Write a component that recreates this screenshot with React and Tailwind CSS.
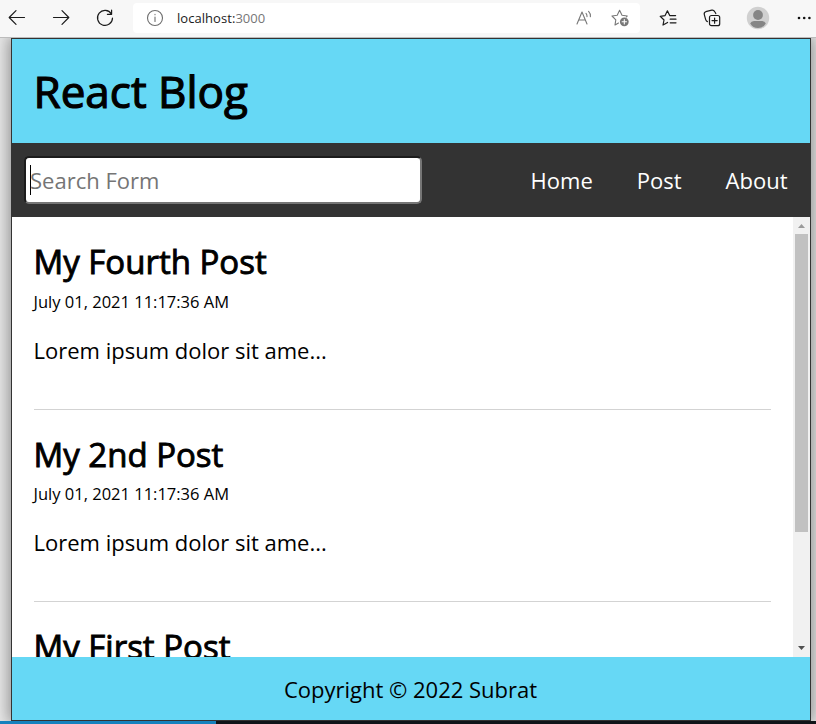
import React from 'react';

const posts = [
  { title: 'My Fourth Post', dateGap: 'mt-[6px]', full: true },
  { title: 'My 2nd Post', dateGap: 'mt-[5px]', full: true },
  { title: 'My First Post', full: false },
];

function Icon({ className = '', size = 18, children, sw = 1.2 }) {
  return (
    <svg
      className={`shrink-0 ${className}`}
      width={size}
      height={size}
      viewBox={`0 0 ${size} ${size}`}
      fill="none"
      stroke="currentColor"
      strokeWidth={sw}
      strokeLinecap="round"
      strokeLinejoin="round"
    >
      {children}
    </svg>
  );
}

function Toolbar() {
  return (
    <div className="flex h-[38px] shrink-0 items-center border-b border-[#bcbcbc] bg-[#f7f7f7] pb-px text-[#1b1b1b]">
      <Icon className="ml-2">
        <path d="M16.5 8.5H1.2M8 1.7L1.2 8.5L8 15.3" />
      </Icon>
      <Icon className="ml-[26px]">
        <path d="M1.5 8.5H16.8M10 1.7L16.8 8.5L10 15.3" />
      </Icon>
      <Icon className="ml-[26px]">
        <path d="M15.4 5A7.5 7.5 0 1 0 16.5 9M15.6 1.2V5.3H11.4" />
      </Icon>
      <div className="ml-[19px] flex h-[30px] w-[507px] items-center rounded-[4px] bg-white">
        <Icon className="ml-[13px] text-[#6e6e6e]" sw={1.1}>
          <circle cx="9" cy="9" r="7.5" />
          <path d="M9 8V12.5M9 5.4V5.8" />
        </Icon>
        <div className="ml-[13px] w-[359px] pt-px font-['Open_Sans',sans-serif] text-[13px] tracking-[0.05px] text-[#1b1b1b]">
          localhost:<span className="text-[#767676]">3000</span>
        </div>
        <Icon className="ml-[39px] text-[#777]" sw={1.1}>
          <path d="M2 15L7 3L12 15M3.7 11H10.3M11 4.4Q12.2 5.7 12 7.6M13.6 2.4Q15.8 4.6 15.4 7.8" />
        </Icon>
        <Icon className="ml-[18px] text-[#777]" sw={1.1}>
          <path d="M7.5 14L4 16L4.8 10.8L1 7L6.2 6.2L8.6 1.3L11 6.2L16.3 7L15.4 8" />
          <circle cx="13.3" cy="12.8" r="4.4" fill="currentColor" stroke="none" />
          <path d="M13.3 10.6V15M11.1 12.8H15.5" stroke="white" />
        </Icon>
      </div>
      <Icon className="ml-[19px]">
        <path d="M8.6 13.4L4 16L5 11L1.2 7.3L6.1 6.6L8.4 1.8L10.7 6.6H16.6M11.2 10.2H17M11.2 13.8H17" />
      </Icon>
      <Icon className="ml-[26px]">
        <rect x="6.5" y="6.5" width="10.2" height="10.2" rx="2" />
        <path d="M11.6 9V14.2M9 11.6H14.2M4.4 12.6Q3.2 12 2.7 10.6L1.3 5.6Q.8 3.4 2.8 2.7L8.8 1.2Q10.6 .8 11.5 2.4M12.8 4.6Q12.4 3.4 11.6 2.6" />
      </Icon>
      <svg className="ml-[25px] shrink-0" width="24" height="24" viewBox="0 0 24 24">
        <circle cx="12" cy="12" r="11.2" fill="#d0d0d0" />
        <circle cx="12" cy="9" r="4.9" fill="#858585" />
        <path d="M4.2 17.5Q5 14.9 8 14.9H16Q19 14.9 19.8 17.5Q17.2 22 12 22T4.2 17.5Z" fill="#858585" />
      </svg>
      <svg className="ml-[26px] shrink-0" width="16" height="6" viewBox="0 0 16 6" fill="#111">
        <circle cx="3" cy="3" r="1.3" />
        <circle cx="8.2" cy="3" r="1.3" />
        <circle cx="13.4" cy="3" r="1.3" />
      </svg>
    </div>
  );
}

function Post({ title, dateGap, full }) {
  return (
    <article className={`shrink-0 pt-[22px] ${full ? 'border-b border-[#d3d3d3] pb-[44px]' : ''}`}>
      <h2 className="text-[33px] leading-[45px] whitespace-nowrap [-webkit-text-stroke:0.9px_black]">{title}</h2>
      {full && (
        <>
          <p className={`${dateGap} text-[16.5px] leading-6 whitespace-nowrap`}>July 01, 2021 11:17:36 AM</p>
          <p className="mt-[21px] text-[22px] leading-[30px] whitespace-nowrap">Lorem ipsum dolor sit ame...</p>
        </>
      )}
    </article>
  );
}

export default function App() {
  return (
    <div className="flex h-[724px] w-[816px] flex-col overflow-hidden bg-[#e8e8e8] font-['Open_Sans',sans-serif] text-black">
      <Toolbar />
      <div className="flex h-[683px] shrink-0 overflow-hidden pl-[11px]">
        <div className="flex w-[800px] flex-col border border-[#333] shadow-[0_0_15px_2px_rgba(0,0,0,0.4)]">
          <header className="flex h-[104px] shrink-0 items-center bg-[#66d8f5] pl-[21.5px]">
            <h1 className="text-[44px] leading-[60px] [-webkit-text-stroke:1.2px_black]">React Blog</h1>
          </header>
          <nav className="flex h-[74px] shrink-0 items-center bg-[#333] pr-[22.5px] pl-[12px] text-[22px] text-white">
            <div className="flex h-[48px] w-[398px] items-center rounded-[5px] border-2 border-t-[#1c1c1c] border-r-[#767676] border-b-[#767676] border-l-[#1c1c1c] bg-white pl-[4px] text-[#757575]">
              <span className="h-[30px] w-px bg-black" />
              <span className="-ml-px">Search Form</span>
            </div>
            <ul className="ml-auto flex gap-[44px]">
              <li>Home</li>
              <li>Post</li>
              <li>About</li>
            </ul>
          </nav>
          <div className="flex h-[440px] shrink-0 overflow-hidden bg-white">
            <main className="flex w-[781px] flex-col overflow-hidden pr-[22px] pl-[21.5px]">
              {posts.map((p) => (
                <Post key={p.title} {...p} />
              ))}
            </main>
            <div className="flex w-[17px] flex-col items-center bg-[#f1f1f1]">
              <svg className="shrink-0" width="17" height="17" viewBox="0 0 17 17" fill="#9b9b9b">
                <path d="M5 11L8.5 7L12 11Z" />
              </svg>
              <div className="h-[298px] w-[13px] bg-[#c1c1c1]" />
              <svg className="mt-auto shrink-0" width="17" height="17" viewBox="0 0 17 17" fill="#505050">
                <path d="M5 6L8.5 10L12 6Z" />
              </svg>
            </div>
          </div>
          <footer className="flex h-[63px] shrink-0 items-center justify-center bg-[#66d8f5] pt-[1px] pr-[1px] text-[22px]">
            Copyright © 2022 Subrat
          </footer>
        </div>
      </div>
      <div className="flex h-[3px] shrink-0 bg-[#101418]">
        <div className="w-[216px] bg-[#1681bd]" />
      </div>
    </div>
  );
}
